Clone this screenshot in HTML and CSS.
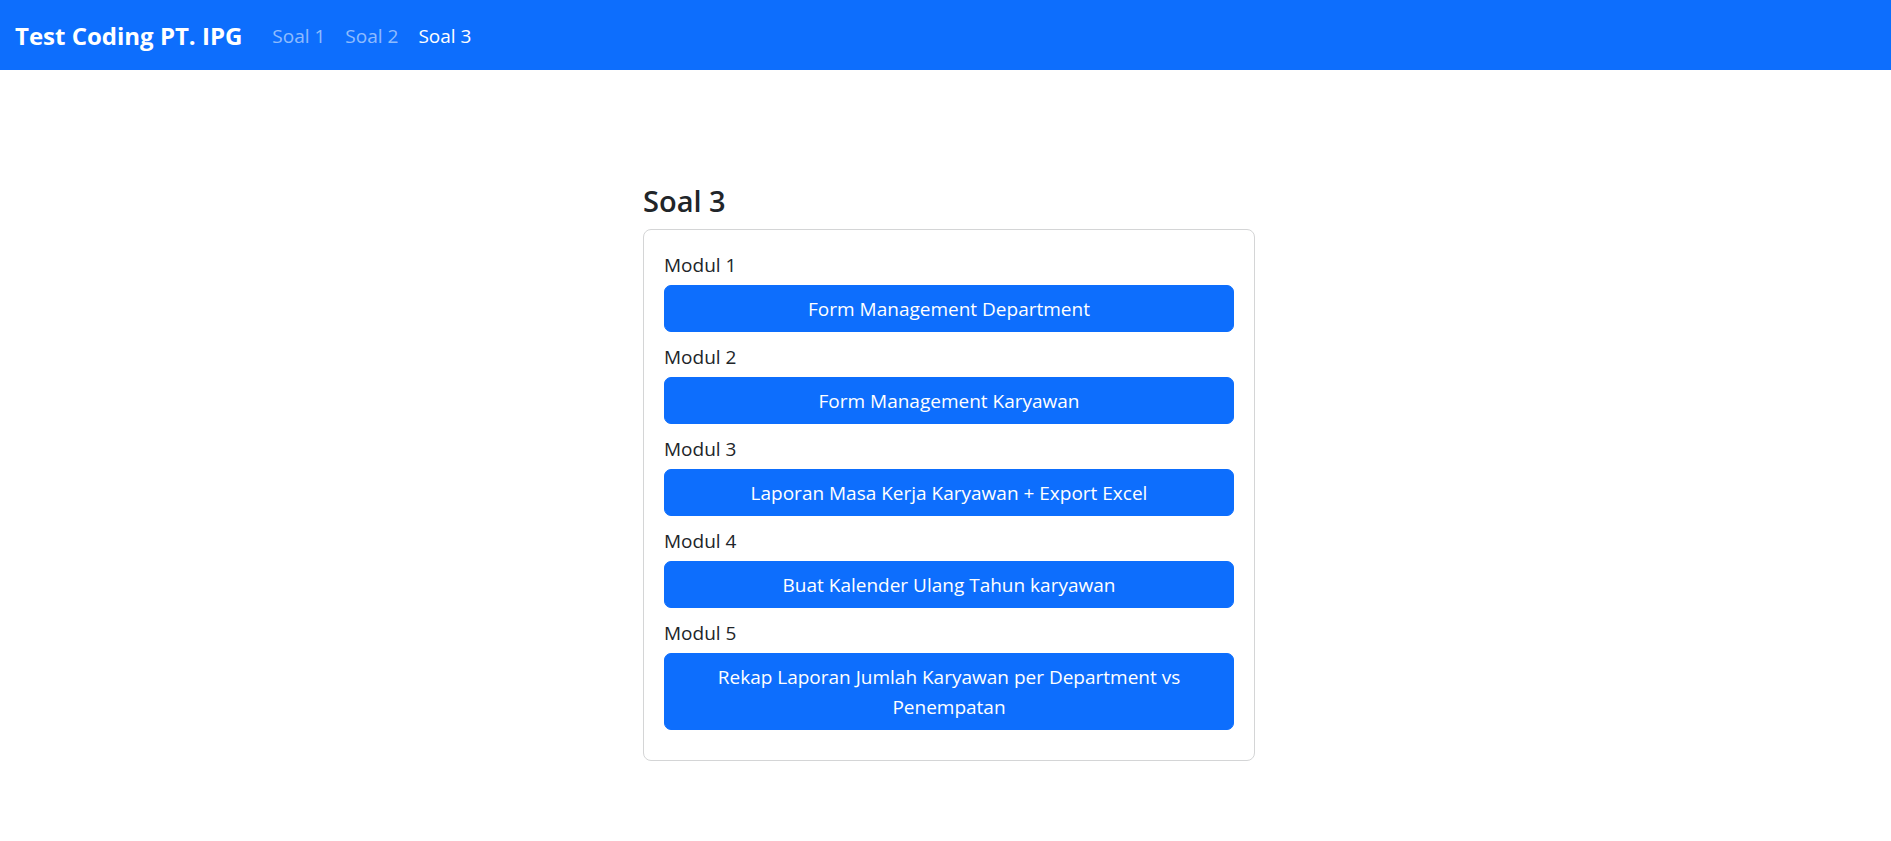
FILE: index.html
```html
<!DOCTYPE html>
<html lang="id">
<head>
<meta charset="utf-8">
<title>Test Coding PT. IPG</title>
<link rel="stylesheet" href="styles.css">
</head>
<body>
<nav class="navbar">
  <a class="brand" href="#">Test Coding PT. IPG</a>
  <div class="nav-links">
    <a class="nav-link" href="#">Soal 1</a>
    <a class="nav-link" href="#">Soal 2</a>
    <a class="nav-link active" href="#">Soal 3</a>
  </div>
</nav>
<main class="page">
  <section class="panel">
    <h4 class="title">Soal 3</h4>
    <div class="card">
      <label class="module-label">Modul 1</label>
      <a class="btn" href="#">Form Management Department</a>
      <label class="module-label">Modul 2</label>
      <a class="btn" href="#">Form Management Karyawan</a>
      <label class="module-label">Modul 3</label>
      <a class="btn" href="#">Laporan Masa Kerja Karyawan + Export Excel</a>
      <label class="module-label">Modul 4</label>
      <a class="btn" href="#">Buat Kalender Ulang Tahun karyawan</a>
      <label class="module-label">Modul 5</label>
      <a class="btn" href="#">Rekap Laporan Jumlah Karyawan per Department vs Penempatan</a>
    </div>
  </section>
</main>
</body>
</html>
```
FILE: styles.css
```css
* { box-sizing: border-box; }

body {
  margin: 0;
  font-family: "Open Sans", "Noto Sans", sans-serif;
  font-size: 19px;
  line-height: 30px;
  color: #212529;
  background: #ffffff;
}

a { text-decoration: none; }

.navbar {
  height: 70px;
  background: #0d6efd;
  display: flex;
  align-items: center;
  padding: 0 15px;
}

.brand {
  color: #ffffff;
  font-size: 24px;
  font-weight: 700;
  line-height: 37px;
  margin-right: 20px;
}

.nav-links {
  display: flex;
}

.nav-link {
  color: rgba(255, 255, 255, 0.55);
  padding: 0 10px;
  font-size: 19px;
  line-height: 30px;
  margin-top: 2px;
}

.nav-link.active { color: #ffffff; }

.page {
  display: flex;
  justify-content: center;
  padding: 113px 0 0 7px;
}

.panel { width: 612px; }

.title {
  margin: 0 0 10px;
  font-size: 29px;
  font-weight: 600;
  line-height: 36px;
  color: #212529;
}

.card {
  border: 1px solid #d4d5d6;
  border-radius: 8px;
  padding: 20px;
}

.module-label {
  display: block;
  line-height: 30px;
  margin-bottom: 5px;
}

.btn {
  display: block;
  width: 100%;
  background: #0d6efd;
  border: 1px solid #0d6efd;
  color: #ffffff;
  border-radius: 7px;
  padding: 7.5px 15px;
  text-align: center;
  line-height: 30px;
  margin-bottom: 10px;
}
```
